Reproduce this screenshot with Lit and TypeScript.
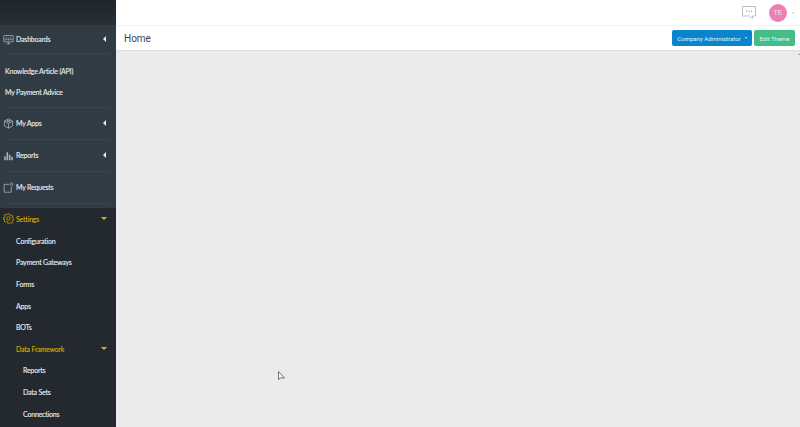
import { LitElement, html, css, svg } from "lit";
import { customElement } from "lit/decorators.js";

const ic = (body: unknown, color = "#aab4ba") => html`<svg class="ic" viewBox="0 0 14 14" fill="none" stroke=${color} stroke-width="1">${body}</svg>`;
const dash = ic(svg`<rect x="1" y="2" width="12" height="8" rx="0.6"/><path d="M3 8V6M5 8V4.5M7 8V5.5M9 8V4M11 8V6M5 12.5h4M7 10v2.5"/>`);
const apps = ic(svg`<path d="M7 1l5.2 3v6L7 13l-5.2-3V4zM1.8 4L7 7l5.2-3M7 7v6M4.4 2.5l5.2 3M9.6 2.5l-5.2 3"/>`);
const reports = ic(svg`<path d="M2.5 13V8M5.5 13V3M8.5 13V6M11.5 13V8.5" stroke-width="2"/>`);
const requests = ic(svg`<path d="M8 3H1.5v10h9V6"/><circle cx="11" cy="2.8" r="1.7"/>`);
const gear = ic(svg`<circle cx="7" cy="7" r="2.2"/><path d="M6 1h2l.4 1.7 1.2.5 1.5-.9 1.4 1.4-.9 1.5.5 1.2 1.7.4v2l-1.7.4-.5 1.2.9 1.5-1.4 1.4-1.5-.9-1.2.5L8 13H6l-.4-1.7-1.2-.5-1.5.9-1.4-1.4.9-1.5-.5-1.2L.2 8V6l1.7-.4.5-1.2-.9-1.5 1.4-1.4 1.5.9 1.2-.5z"/>`, "#d4a900");

@customElement("app-root")
export class AppRoot extends LitElement {
  static styles = css`
    :host { display: flex; width: 800px; height: 427px; overflow: hidden; position: relative; font-family: Lato, "Open Sans", sans-serif; background: #ebebeb; }
    .side { width: 116px; flex: none; background: #23292e; color: #e8ecee; font-size: 7px; letter-spacing: -0.2px; font-weight: 400; -webkit-text-stroke: 0.12px #e8ecee; display: flex; flex-direction: column; }
    .brand { height: 25px; background: linear-gradient(#1f2529, #283036); }
    .group { background: #303b43; height: 183px; display: flex; flex-direction: column; }
    .row { display: flex; align-items: center; padding: 0 5px 0 3px; }
    .sep { border-bottom: 1px solid #38454d; margin: 0 5px; }
    .r1 { height: 28px; }
    .tall { height: 31px; }
    .plain { height: 21px; padding-left: 5px; }
    .ic { width: 11px; height: 11px; margin-right: 2px; flex: none; }
    .label { flex: 1; }
    .left { width: 0; height: 0; border: 3px solid transparent; border-left: 0; border-right: 3px solid #e8ecee; margin-right: 5px; }
    .down { width: 0; height: 0; border: 3px solid transparent; border-bottom: 0; border-top: 3px solid #e5b800; margin-right: 4px; }
    .gold { color: #d9ad00; -webkit-text-stroke: 0.12px #d9ad00; }
    .settings { height: 21px; margin-bottom: 1px; }
    .sub { height: 21.6px; padding-left: 16px; }
    .sub2 { padding-left: 23px; }
    .gap6 { height: 6px; }
    .gap4 { height: 4.5px; }
    .main { flex: 1; display: flex; flex-direction: column; min-width: 0; }
    .top { height: 25px; background: #fff; display: flex; align-items: center; justify-content: flex-end; gap: 13px; padding-right: 6px; box-sizing: border-box; }
    .chat { width: 16px; height: 15px; margin-right: -1px; }
    .avatar { width: 18px; height: 18px; border-radius: 50%; background: #ec7fb5; color: #fbe3ee; font: 7px "Liberation Sans", sans-serif; display: flex; align-items: center; justify-content: center; }
    .caret { width: 0; height: 0; border: 1.5px solid transparent; border-top: 2px solid #c4c8cc; border-bottom: 0; margin-left: -8px; }
    .title { height: 26px; background: #fff; border-top: 1px solid #f0f0f0; border-bottom: 1px solid #dcdcdc; box-sizing: border-box; display: flex; align-items: center; padding: 0 5px 0 8px; gap: 2px; }
    .title h1 { flex: 1; margin: 0; font: 400 10px Roboto, sans-serif; color: #3a4650; }
    .btn { height: 16px; border-radius: 2px; color: #e6f4fa; font: 400 6px Roboto, sans-serif; display: flex; align-items: center; justify-content: center; box-sizing: border-box; }
    .blue { width: 80px; background: #0a85cc; gap: 4px; }
    .blue i { width: 0; height: 0; border: 1.5px solid transparent; border-top: 2px solid #e6f4fa; border-bottom: 0; }
    .green { width: 41px; background: #45bd85; }
    .body { flex: 1; background: #ebebeb; position: relative; }
    .scroll { position: absolute; right: 0; top: 2px; width: 0; height: 0; border: 1.5px solid transparent; border-top: 0; border-bottom: 2px solid #9a9a9a; }
    .cursor { position: absolute; left: 278px; top: 371px; width: 7px; height: 10px; }
  `;

  render() {
    const arrow = html`<span class="left"></span>`;
    return html`
      <nav class="side">
        <div class="brand"></div>
        <div class="group">
          <div class="row r1">${dash}<span class="label">Dashboards</span>${arrow}</div>
          <div class="sep"></div>
          <div class="gap6"></div>
          <div class="row plain"><span class="label">Knowledge Article (API)</span></div>
          <div class="row plain"><span class="label">My Payment Advice</span></div>
          <div class="gap4"></div>
          <div class="sep"></div>
          <div class="row tall">${apps}<span class="label">My Apps</span>${arrow}</div>
          <div class="sep"></div>
          <div class="row tall">${reports}<span class="label">Reports</span>${arrow}</div>
          <div class="sep"></div>
          <div class="row tall">${requests}<span class="label">My Requests</span></div>
          <div class="sep"></div>
        </div>
        <div class="row settings">${gear}<span class="label gold">Settings</span><span class="down"></span></div>
        ${["Configuration", "Payment Gateways", "Forms", "Apps", "BOTs"].map(t => html`<div class="row sub"><span class="label">${t}</span></div>`)}
        <div class="row sub"><span class="label gold">Data Framework</span><span class="down"></span></div>
        ${["Reports", "Data Sets", "Connections"].map(t => html`<div class="row sub sub2"><span class="label">${t}</span></div>`)}
      </nav>
      <div class="main">
        <div class="top">
          <svg class="chat" viewBox="0 0 16 15" fill="none" stroke="#b4b8c2" stroke-width="0.9"><path d="M1.5 1.5h13v9.5h-3v2.5l-3-2.5h-7z"/><path d="M5 6.2h1M7.5 6.2h1M10 6.2h1" stroke="#70757f"/></svg>
          <div class="avatar">TE</div>
          <span class="caret"></span>
        </div>
        <div class="title">
          <h1>Home</h1>
          <div class="btn blue">Company Administrator <i></i></div>
          <div class="btn green">Edit Theme</div>
        </div>
        <div class="body"><span class="scroll"></span></div>
      </div>
      <svg class="cursor" viewBox="0 0 7 10"><path d="M.5.5v8l2-1.5h4z" fill="#f4f4f4" stroke="#555" stroke-width="0.8"/></svg>
    `;
  }
}
